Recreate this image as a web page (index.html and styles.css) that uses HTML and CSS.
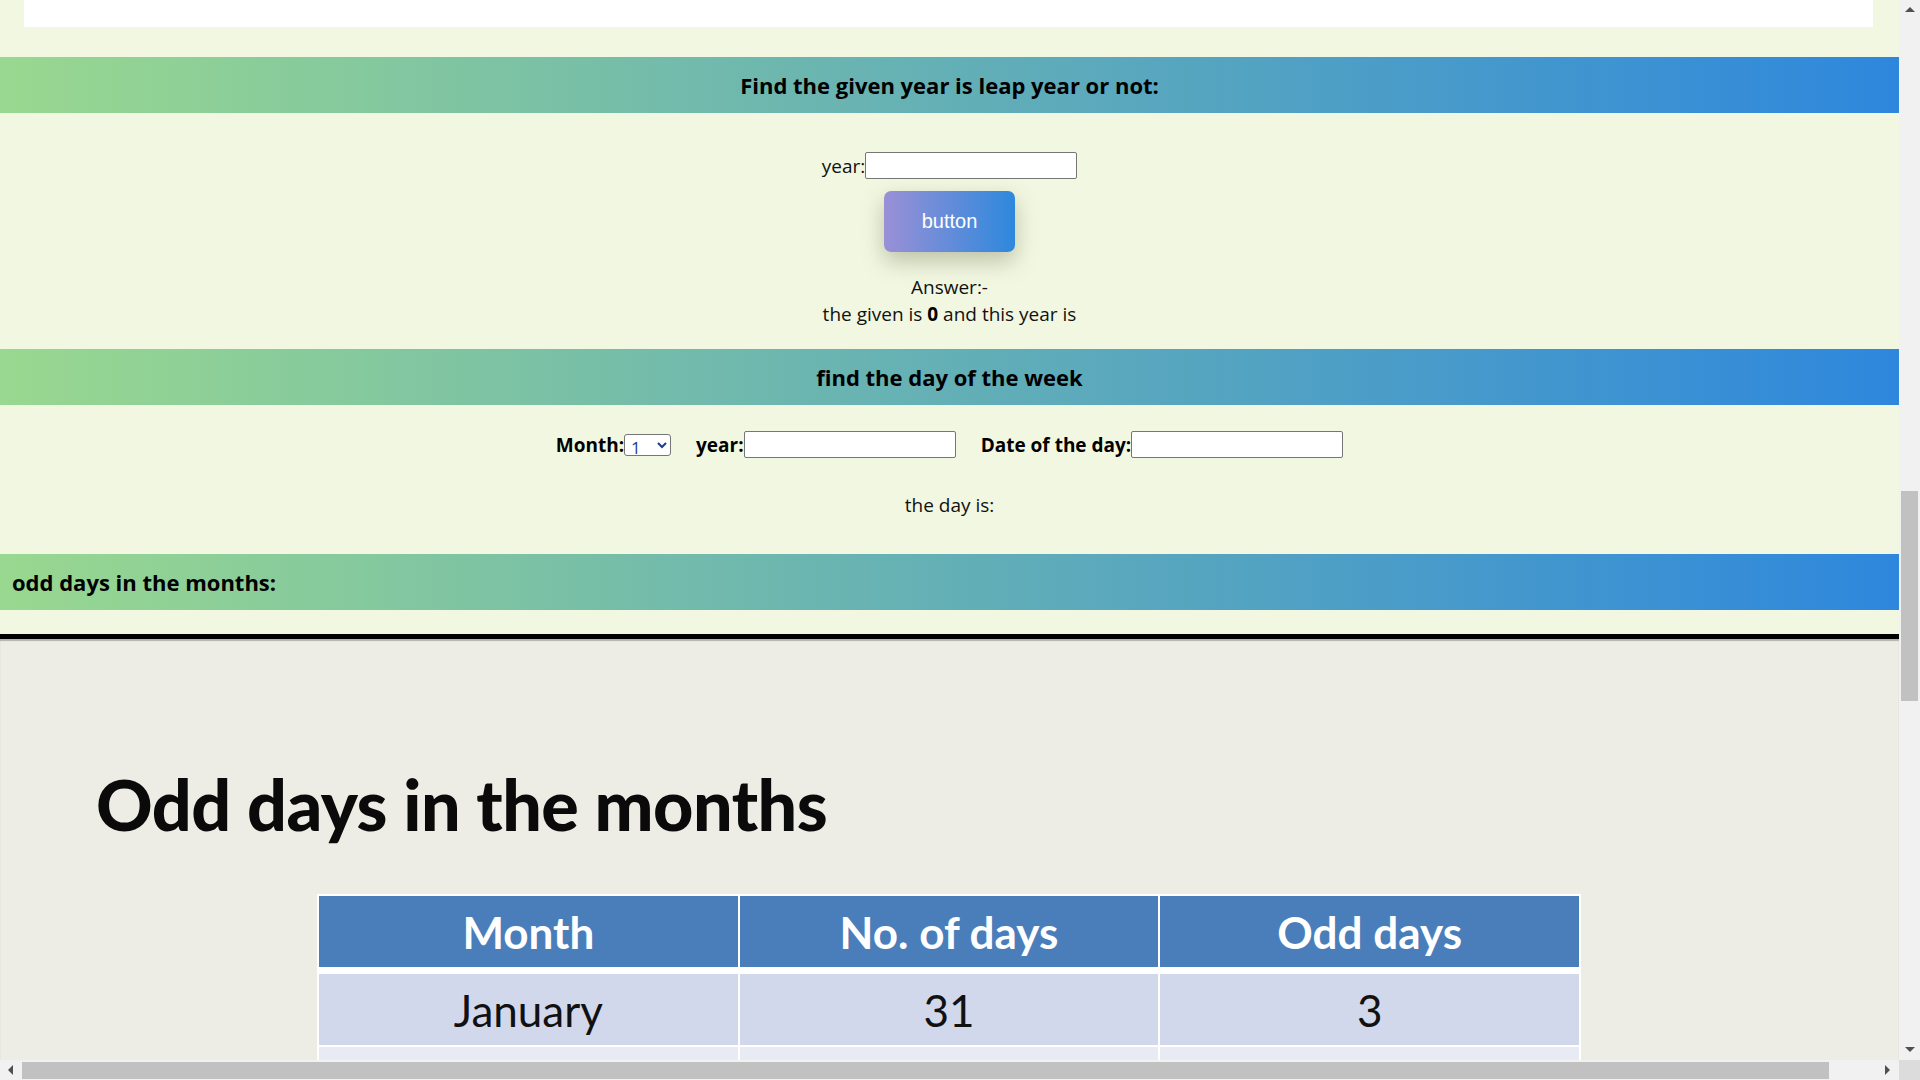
FILE: index.html
```html
<!DOCTYPE html>
<html lang="en">
<head>
<meta charset="utf-8">
<title>Leap year and day of the week</title>
<link rel="stylesheet" href="styles.css">
</head>
<body>
<div class="window">
  <div class="viewport">
    <div class="topbox"></div>
    <h3 class="bar bar-center bar-first">Find the given year is leap year or not:</h3>
    <div class="leap">
      <div class="yearrow"><label class="lbl">year:</label><input class="field" type="text"></div>
      <button class="btn" type="button">button</button>
      <p class="answer">Answer:-<br>the given is <b>0</b> and this year is</p>
    </div>
    <h3 class="bar bar-center">find the day of the week</h3>
    <div class="dayform">
      <div class="grp"><label class="lbl-b">Month:</label><select class="sel"><option>1</option><option>2</option><option>3</option></select></div>
      <div class="grp"><label class="lbl-b">year:</label><input class="field" type="text"></div>
      <div class="grp"><label class="lbl-b">Date of the day:</label><input class="field" type="text"></div>
    </div>
    <p class="dayis">the day is:</p>
    <h3 class="bar bar-left">odd days in the months:</h3>
    <div class="slide">
      <h1 class="slide-title">Odd days in the months</h1>
      <table class="odd">
        <thead>
          <tr><th>Month</th><th>No. of days</th><th>Odd days</th></tr>
        </thead>
        <tbody>
          <tr class="r1"><td>January</td><td>31</td><td>3</td></tr>
          <tr class="r2"><td>February</td><td>28 / 29</td><td>0 / 1</td></tr>
        </tbody>
      </table>
    </div>
  </div>
  <div class="vscroll">
    <div class="arrow arrow-up"></div>
    <div class="vthumb"></div>
    <div class="vspace"></div>
    <div class="arrow arrow-down"></div>
  </div>
  <div class="hscroll">
    <div class="harrow harrow-left"></div>
    <div class="hthumb"></div>
    <div class="harrow harrow-right"></div>
  </div>
  <div class="corner"></div>
</div>
</body>
</html>
```
FILE: styles.css
```css
html, body {
  margin: 0;
  padding: 0;
  overflow: hidden;
}
body {
  font-family: "Open Sans", "Noto Sans", sans-serif;
  color: #000;
}
.window {
  display: grid;
  grid-template-columns: 1899px 21px;
  grid-template-rows: 1060px 20px;
  width: 1920px;
  height: 1080px;
}
.viewport {
  overflow: hidden;
  background: #f2f7e1;
  display: flex;
  flex-direction: column;
}
.topbox {
  height: 27px;
  margin: 0 26px 0 24px;
  background: #fff;
  flex: none;
}
.bar {
  flex: none;
  margin: 0;
  height: 56px;
  display: flex;
  align-items: center;
  font-size: 22px;
  font-weight: 700;
  background: linear-gradient(to right, #99d88f, #2e87dd);
}
.bar-first { margin-top: 30px; }
.bar-center { justify-content: center; }
.bar-left { padding-left: 12px; }

.leap {
  display: flex;
  flex-direction: column;
  align-items: center;
  padding-top: 39px;
  padding-bottom: 21px;
}
.yearrow {
  display: flex;
  align-items: center;
  height: 27px;
}
.lbl {
  font-size: 19px;
  color: #111;
}
.field {
  box-sizing: border-box;
  width: 212px;
  height: 27px;
  border: 1px solid #767676;
  border-radius: 2px;
  background: #fff;
  margin: 0;
  padding: 0 3px;
}
.btn {
  margin-top: 12px;
  width: 131px;
  height: 61px;
  border: none;
  border-radius: 7px;
  color: #fff;
  font-family: "Liberation Sans", Arial, sans-serif;
  font-size: 20px;
  background: linear-gradient(to right, #9a90d6, #2d88dd);
  box-shadow: 0 9px 22px rgba(90, 95, 60, 0.35);
}
.answer {
  margin: 22px 0 0;
  text-align: center;
  font-size: 19px;
  line-height: 27px;
  color: #111;
}
.answer b { color: #000; }

.dayform {
  display: flex;
  justify-content: center;
  align-items: center;
  gap: 25px;
  margin-top: 26px;
  height: 27px;
}
.grp {
  display: flex;
  align-items: center;
}
.lbl-b {
  font-size: 19px;
  font-weight: 700;
}
.sel {
  box-sizing: border-box;
  width: 47px;
  height: 22px;
  border: 1px solid #767676;
  border-radius: 3px;
  background: #fff;
  font-family: "Open Sans", sans-serif;
  font-size: 17px;
  color: #1a3d8f;
  padding: 0 0 0 2px;
}
.dayis {
  margin: 34px 0 35px;
  text-align: center;
  font-size: 19px;
  line-height: 27px;
  color: #111;
}

.slide {
  margin-top: 24px;
  flex: none;
  background: #eeede5;
  border-top: 5px solid #000;
  box-shadow: inset 0 2px 1px 0 rgba(0, 0, 0, 0.25);
  height: 600px;
  font-family: "Lato", "Open Sans", sans-serif;
}
.slide-title {
  margin: 129px 0 0 96px;
  font-size: 70px;
  line-height: 72px;
  font-weight: 900;
  color: #0a0a0a;
  letter-spacing: -0.5px;
}
.odd {
  margin: 54px 0 0 317px;
  width: 1264px;
  border-collapse: collapse;
  table-layout: fixed;
}
.odd th, .odd td {
  border: 2px solid #fff;
  text-align: center;
  height: 71px;
  padding: 0;
}
.odd th {
  background: #4a7ebb;
  color: #fff;
  font-size: 44px;
  font-weight: 700;
  border-bottom-width: 7px;
}
.odd td {
  font-size: 44px;
  color: #111;
}
.odd .r1 td { background: #d2d8ec; }
.odd .r2 td { background: #e9ebf4; }

.vscroll {
  background: #f1f1f1;
  display: flex;
  flex-direction: column;
  align-items: center;
}
.arrow {
  flex: none;
  width: 0;
  height: 0;
  border-left: 5px solid transparent;
  border-right: 5px solid transparent;
}
.arrow-up {
  margin-top: 7px;
  border-bottom: 5px solid #505050;
}
.arrow-down {
  margin-bottom: 8px;
  border-top: 5px solid #505050;
}
.vthumb {
  flex: none;
  margin-top: 479px;
  width: 17px;
  height: 210px;
  background: #c1c1c1;
}
.vspace { flex: 1; }

.hscroll {
  background: #f1f1f1;
  display: flex;
  align-items: center;
  padding: 0 9px 0 8px;
}
.harrow {
  flex: none;
  width: 0;
  height: 0;
  border-top: 5px solid transparent;
  border-bottom: 5px solid transparent;
}
.harrow-left {
  border-right: 5px solid #505050;
}
.harrow-right {
  border-left: 5px solid #505050;
  margin-left: auto;
}
.hthumb {
  flex: none;
  margin-left: 9px;
  width: 1807px;
  height: 17px;
  background: #c1c1c1;
}
.corner {
  background: #dcdcdc;
}
```
